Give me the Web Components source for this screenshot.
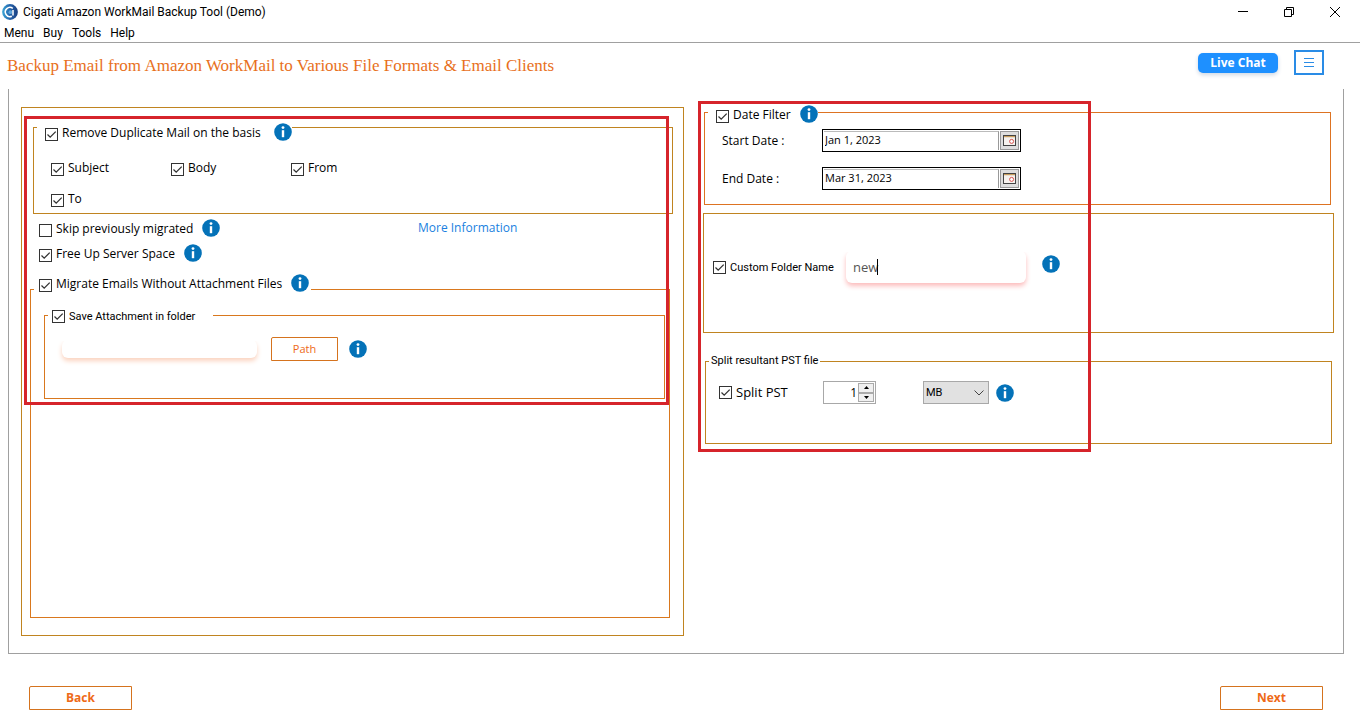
<!DOCTYPE html>
<html lang="en">
<head>
<meta charset="utf-8">
<title>Cigati Amazon WorkMail Backup Tool (Demo)</title>
<style>
html, body { margin: 0; background: #fff; }
body { font: 12px/16px "Open Sans", "Noto Sans", sans-serif; color: #000; }
</style>
</head>
<body>
<backup-app></backup-app>
<script>
const base = `
  *, *::before, *::after { box-sizing: border-box; }
  [hidden] { display: none; }
  button, input, select { font: inherit; color: inherit; margin: 0; padding: 0; border-radius: 0; }
  button { cursor: pointer; }
`;
function define(name, css, html, setup) {
  customElements.define(name, class extends HTMLElement {
    constructor() {
      super();
      this.attachShadow({ mode: 'open' });
    }
    connectedCallback() {
      if (this.shadowRoot.childNodes.length) return;
      const t = document.createElement('template');
      t.innerHTML = `<style>${base}${css}</style>${html}`;
      this.shadowRoot.append(t.content.cloneNode(true));
      if (setup) setup(this, this.shadowRoot);
    }
  });
}

define('info-icon', `
  :host { display: block; width: 18px; height: 18px; flex: none; }
  svg { display: block; }
`, `<svg width="18" height="18" viewBox="0 0 18 18" role="img" aria-label="Info">
  <circle cx="9" cy="9" r="8.8" fill="#0472b8"/>
  <circle cx="9" cy="4.6" r="1.4" fill="#fff"/>
  <rect x="7.8" y="7.2" width="2.4" height="7" fill="#fff"/>
</svg>`);

/* Tick box with its label; "level" centres the text on the box. */
define('check-box', `
  :host { display: block; }
  label { display: flex; align-items: flex-end; gap: 4px; line-height: 17px; white-space: nowrap; }
  :host([level]) label { align-items: center; }
  .box { display: grid; flex: none; }
  .box > * { grid-area: 1 / 1; }
  input { appearance: none; width: 13px; height: 13px; border: 1px solid #333; background: #fff; }
  svg { pointer-events: none; display: none; }
  input:checked + svg { display: block; }
`, `<label><span class="box"><input type="checkbox"><svg width="13" height="13" viewBox="0 0 13 13" fill="none" stroke="#333" stroke-width="1.3"><path d="M2.5 6.5 5.2 9.2 10.7 3.6"/></svg></span><slot></slot></label>`,
(host, root) => { root.querySelector('input').checked = host.hasAttribute('checked'); });

define('group-box', `
  :host { display: grid; }
  fieldset { min-width: 0; margin: 0; border: 1px solid var(--line, #c08420); padding: 0; }
  legend { display: flex; align-items: center; gap: 9px; margin-left: 3px; padding: var(--head, 0 2px); white-space: nowrap; }
  .body { padding: var(--body, 0); }
`, `<fieldset><legend><slot name="head"></slot></legend><div class="body"><slot></slot></div></fieldset>`,
(host, root) => { if (!host.querySelector('[slot=head]')) root.querySelector('legend').remove(); });

define('outline-button', `
  :host { display: block; }
  button { display: block; width: 100%; height: 24px; border: 1px solid #d5731e; border-top-left-radius: 2px; background: #fff; color: #ee6a18; }
  :host([strong]) button { font-weight: 700; }
`, `<button type="button"><slot></slot></button>`);

define('soft-input', `
  :host { display: block; position: relative; }
  input { display: block; width: 100%; height: var(--h, 18px); padding: 0 7px; border: 0; outline: 0; border-radius: 6px; background: #fff; color: #555; font-size: 13px; box-shadow: 0 3px 5px var(--glow); clip-path: inset(1px -8px -10px -8px); }
  i { position: absolute; left: 31px; top: 8px; width: 1px; height: 16px; background: #000; }
`, `<input type="text"><i hidden></i>`,
(host, root) => {
  const input = root.querySelector('input');
  input.value = host.getAttribute('value') || '';
  input.setAttribute('aria-label', host.getAttribute('label'));
  root.querySelector('i').hidden = !host.hasAttribute('caret');
});

define('date-field', `
  :host { display: grid; grid-template-columns: 100px 199px; align-items: center; }
  .field { display: flex; height: 23px; border: 1px solid #000; padding: 1px; }
  input { flex: 1; min-width: 0; border: 0; border-right: 1px solid #999; border-top: 1px solid #bbb; padding: 0 1px 2px; font-size: 11px; outline: 0; }
  button { width: 19px; margin-left: 1px; border: 1px solid #999; background: #dedede; display: grid; place-items: center; }
`, `<label for="d"></label><div class="field"><input id="d" type="text"><button type="button" aria-label="Open calendar">
  <svg width="13" height="11" viewBox="0 0 13 11"><rect x=".5" y=".5" width="12" height="10" fill="#f6f2ee" stroke="#444"/><path d="M1 1.5h11" stroke="#c8a060"/><path d="M1 2.5h11" stroke="#eaded0"/><circle cx="8.6" cy="6.4" r="2" fill="#fff" stroke="#d9534f"/></svg></button></div>`,
(host, root) => {
  root.querySelector('label').textContent = host.getAttribute('label');
  root.querySelector('input').value = host.getAttribute('value');
});

define('number-spinner', `
  :host { display: flex; width: 53px; height: 23px; border: 1px solid #a8a8a8; padding: 1px; }
  input { flex: 1; min-width: 0; width: 0; border: 0; outline: 0; text-align: right; padding-right: 1px; appearance: textfield; }
  input::-webkit-inner-spin-button { display: none; }
  .steps { display: grid; grid-template-rows: 1fr 1fr; width: 16px; }
  button { display: grid; place-items: center; border: 1px solid #aaa; background: #f0f0f0; min-height: 0; }
  svg { display: block; }
`, `<input type="number" value="1" min="1" aria-label="Split size"><div class="steps">
  <button type="button" aria-label="Increase"><svg width="5" height="3"><path d="M0 3 2.5 0 5 3z"/></svg></button>
  <button type="button" aria-label="Decrease"><svg width="5" height="3"><path d="M0 0 2.5 3 5 0z"/></svg></button></div>`,
(host, root) => {
  const [up, down] = root.querySelectorAll('button'), n = root.querySelector('input');
  up.onclick = () => n.stepUp();
  down.onclick = () => n.stepDown();
});

define('unit-select', `
  :host { display: grid; height: 23px; }
  select { grid-area: 1 / 1; appearance: none; width: 100%; border: 1px solid #a8a8a8; background: #e1e1e1; padding: 0 2px; font: 11px Roboto, sans-serif; }
  svg { grid-area: 1 / 1; place-self: center end; margin-right: 5px; pointer-events: none; }
`, `<select aria-label="Size unit"><option>MB</option><option>GB</option></select>
<svg width="10" height="6" viewBox="0 0 10 6" fill="none" stroke="#444"><path d="M.5.5 5 5 9.5.5"/></svg>`);

/* Red highlight frame laid over a region. */
define('highlight-frame', `
  :host { display: block; position: absolute; border: 3px solid #d6242b; pointer-events: none; }
`, ``);

define('title-bar', `
  :host { display: flex; align-items: center; height: 24px; padding: 0 2px; font-family: Roboto, sans-serif; }
  .name { margin-left: 5px; flex: 1; }
  button { width: 46px; height: 22px; border: 0; background: none; display: grid; place-items: center; }
`, `<svg width="16" height="16" viewBox="0 0 16 16" aria-hidden="true"><defs><linearGradient id="g" x1="0" x2="1"><stop offset="0" stop-color="#3ba6d6"/><stop offset=".5" stop-color="#2563ab"/><stop offset="1" stop-color="#1b3f80"/></linearGradient></defs>
  <circle cx="8" cy="8" r="7.900" fill="url(#g)"/><path d="M9.800 12.200A4.600 4.600 0 1 1 10.800 4.400" fill="none" stroke="#fff" stroke-width="1.500"/><circle cx="8.400" cy="8.200" r="1.900" fill="#5fa6dc"/><path d="M11 6v5.500" stroke="#fff" stroke-width="1.500"/></svg>
<span class="name">Cigati Amazon WorkMail Backup Tool (Demo)</span>
<button type="button" aria-label="Minimize"><svg width="10" height="10"><path d="M0 4.500h10" stroke="#000"/></svg></button>
<button type="button" aria-label="Restore"><svg width="10" height="10" fill="none" stroke="#000"><path d="M.5 2.500h7v7h-7zM2.500 2.500v-2h7v7h-2"/></svg></button>
<button type="button" aria-label="Close"><svg width="10" height="10" stroke="#000"><path d="M0 0 10 10M10 0 0 10"/></svg></button>`);

define('menu-bar', `
  :host { display: block; height: 19px; border-bottom: 1px solid #a0a0a0; font-family: Roboto, sans-serif; }
  nav { display: flex; gap: 9px; padding: 0 4px; }
  button { border: 0; background: none; line-height: 18px; }
`, `<nav><button type="button">Menu</button><button type="button">Buy</button><button type="button">Tools</button><button type="button">Help</button></nav>`);

define('page-header', `
  :host { display: flex; align-items: flex-start; height: 46px; padding: 7px 36px 0 7px; }
  h1 { flex: 1; margin: 0; font: 17px/32px "Liberation Serif", serif; color: #e8701c; }
  .chat { width: 80px; height: 20px; margin: 3px 16px 0 0; border: 0; border-radius: 5px; background: #1e90ff; color: #fff; font-weight: 700; box-shadow: 0 2px 4px #cfd8e4; }
  .more { width: 30px; height: 25px; border: 2px solid #2a8ce6; background: #fff; display: grid; place-items: center; }
`, `<h1>Backup Email from Amazon WorkMail to Various File Formats &amp; Email Clients</h1>
<button class="chat" type="button">Live Chat</button>
<button class="more" type="button" aria-label="Menu"><svg width="10" height="10" stroke="#2a8ce6"><path d="M0 .5h10M0 4.500h10M0 8.500h10"/></svg></button>`);

define('mail-options', `
  :host { display: flex; flex-direction: column; position: relative; margin-top: 5px; border: 1px solid #c08420; padding: 5px 0 17px; }
  .dup { --head: 10px 0 0 8px; --body: 18px 0 6px 17px; margin: 0 10px 0 11px; }
  .dup > info-icon { margin-left: 4px; }
  .keys { display: grid; grid-template-columns: repeat(auto-fill, 120px); width: 400px; max-width: 100%; row-gap: 14px; }
  .row { display: grid; grid-template-columns: 379px auto; align-items: center; margin: 5px 0 0 17px; }
  .pair { display: flex; align-items: flex-end; gap: 9px; }
  .free { margin: 7px 0 12px 17px; }
  a { color: #1a7fe0; text-decoration: none; justify-self: start; }
  .mig { --head: 0 2px 13px 5px; --body: 1px 4px 0 13px; --line: #d9781e; flex: 1; margin: 0 13px 0 8px; }
  .save { --head: 2px 18px 0 4px; --body: 12px 0 37px 17px; --line: #d9781e; }
  .path { display: flex; align-items: center; }
  .path soft-input { width: 195px; --glow: #fbd3bf; margin-right: 14px; }
  .path outline-button { width: 67px; margin-right: 11px; font-size: 11px; }
  .tight { font-family: Roboto, sans-serif; font-size: 11px; }
  highlight-frame { left: 2px; right: 14px; top: 8px; height: 289px; }
`, `<group-box class="dup">
  <check-box slot="head" checked>Remove Duplicate Mail on the basis</check-box><info-icon slot="head"></info-icon>
  <div class="keys"><check-box checked>Subject</check-box><check-box checked>Body</check-box><check-box checked>From</check-box><check-box checked>To</check-box></div>
</group-box>
<div class="row"><div class="pair"><check-box>Skip previously migrated</check-box><info-icon></info-icon></div><a href="#info">More Information</a></div>
<div class="pair free"><check-box checked>Free Up Server Space</check-box><info-icon></info-icon></div>
<group-box class="mig">
  <check-box slot="head" checked>Migrate Emails Without Attachment Files</check-box><info-icon slot="head"></info-icon>
  <group-box class="save">
    <check-box class="tight" slot="head" level checked>Save Attachment in folder</check-box>
    <div class="path"><soft-input label="Attachment folder"></soft-input><outline-button>Path</outline-button><info-icon></info-icon></div>
  </group-box>
</group-box>
<highlight-frame></highlight-frame>`);

define('filter-options', `
  :host { display: block; position: relative; }
  .date { --head: 3px 0 0 8px; --body: 6px 0 14px 17px; margin: 0 3px 0 1px; --line: #dd7322; }
  .dates { display: grid; gap: 15px; }
  .folder { --body: 37px 0 49px 9px; margin-top: 8px; }
  .name { display: grid; grid-template-columns: 133px 180px auto; align-items: center; justify-content: start; }
  .name soft-input { --h: 32px; --glow: #fcbcbc; }
  .name info-icon { align-self: start; margin: 4px 0 0 16px; }
  .tight { font-family: Roboto, sans-serif; font-size: 11px; }
  .split { --body: 12px 0 39px 13px; margin: 20px 2px 0; }
  .size { display: grid; grid-template-columns: 104px 100px 66px auto; align-items: center; justify-content: start; }
  .size check-box { font-size: 13px; }
  .size info-icon { margin-left: 7px; }
  highlight-frame { left: -5px; top: -1px; width: 393px; height: 351px; }
`, `<group-box class="date">
  <check-box slot="head" checked>Date Filter</check-box><info-icon slot="head"></info-icon>
  <div class="dates"><date-field label="Start Date :" value="Jan 1, 2023"></date-field><date-field label="End Date :" value="Mar 31, 2023"></date-field></div>
</group-box>
<group-box class="folder"><div class="name"><check-box class="tight" level checked>Custom Folder Name</check-box><soft-input label="Folder name" value="new" caret></soft-input><info-icon></info-icon></div></group-box>
<group-box class="split"><span class="tight" slot="head">Split resultant PST file</span>
  <div class="size"><check-box level checked>Split PST</check-box><number-spinner></number-spinner><unit-select></unit-select><info-icon></info-icon></div>
</group-box>
<highlight-frame></highlight-frame>`);

define('backup-app', `
  :host { display: flex; flex-direction: column; min-height: 100vh; }
  main { flex: 1; display: grid; grid-template-columns: 663fr 631fr; gap: 19px; margin: 0 16px 0 8px; padding: 13px 9px 17px 12px; border: 1px solid #a0a0a0; border-top: 0; }
  footer { display: flex; justify-content: space-between; padding: 32px 37px 17px 29px; }
  footer outline-button { width: 103px; }
`, `<title-bar></title-bar><menu-bar></menu-bar><page-header></page-header>
<main><mail-options></mail-options><filter-options></filter-options></main>
<footer><outline-button strong>Back</outline-button><outline-button strong>Next</outline-button></footer>`);
</script>
</body>
</html>
